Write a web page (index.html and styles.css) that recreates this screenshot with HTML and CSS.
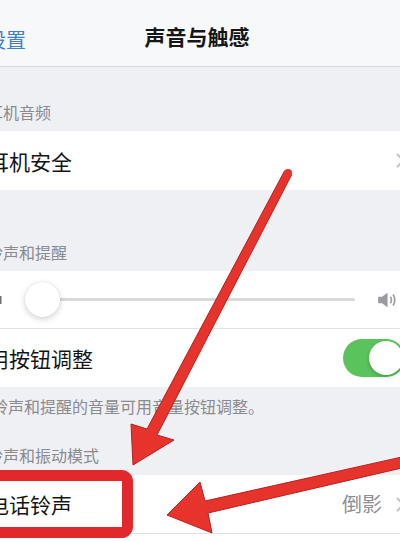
FILE: index.html
```html
<!DOCTYPE html>
<html lang="zh">
<head>
<meta charset="utf-8">
<title>声音与触感</title>
<link rel="stylesheet" href="styles.css">
</head>
<body>
<div class="screen">
  <header class="nav">
    <span class="back">设置</span>
    <h1 class="title">声音与触感</h1>
  </header>

  <div class="sec-h sec-1">耳机音频</div>
  <div class="group">
    <div class="cell cell-59">
      <span class="label">耳机安全</span>
      <svg class="chev" viewBox="0 0 9 15"><path d="M1.5 1.5 L7.5 7.5 L1.5 13.5" fill="none" stroke="#c4c4c7" stroke-width="2" stroke-linecap="round" stroke-linejoin="round"/></svg>
    </div>
  </div>

  <div class="sec-h sec-2">铃声和提醒</div>
  <div class="group">
    <div class="cell slider-cell">
      <svg class="spk-low" viewBox="0 0 16 16"><path d="M1 5.5 H4.5 L9 2 V14 L4.5 10.5 H1 Z" fill="#707074"/><rect x="11" y="4" width="3.5" height="8" fill="#707074"/></svg>
      <div class="track">
        <div class="track-line"></div>
        <div class="thumb"></div>
      </div>
      <svg class="spk-high" viewBox="0 0 18 16"><path d="M1 5 H4.5 L9.5 1.5 V14.5 L4.5 11 H1 Z" fill="#9b9b9f"/><path d="M12 5 Q14 8 12 11" fill="none" stroke="#9b9b9f" stroke-width="1.5"/><path d="M14.5 3 Q17.5 8 14.5 13" fill="none" stroke="#9b9b9f" stroke-width="1.5"/></svg>
    </div>
    <div class="sep"></div>
    <div class="cell cell-58">
      <span class="label">用按钮调整</span>
      <span class="toggle"><span class="knob"></span></span>
    </div>
  </div>

  <div class="sec-f">铃声和提醒的音量可用音量按钮调整。</div>
  <div class="sec-h sec-3">铃声和振动模式</div>
  <div class="group">
    <div class="cell cell-58">
      <span class="label">电话铃声</span>
      <span class="detail">倒影</span>
      <svg class="chev chev-gap" viewBox="0 0 9 15"><path d="M1.5 1.5 L7.5 7.5 L1.5 13.5" fill="none" stroke="#c4c4c7" stroke-width="2" stroke-linecap="round" stroke-linejoin="round"/></svg>
    </div>
    <div class="sep"></div>
    <div class="cell cell-58"></div>
  </div>

  <svg class="marks" viewBox="0 0 400 541" width="400" height="541">
    <rect x="-20" y="475.5" width="147.5" height="57" rx="6" ry="6" fill="none" stroke="#e1282b" stroke-width="11"/>
    <g fill="#e6332c" stroke="#b9201f" stroke-width="1" stroke-linejoin="round">
      <polygon points="284.5,171 291.5,175 157,435 174,440 133,465 131,424 147,429"/>
      <polygon points="404,456.5 404,467.5 208,513 212,533 167,515 200,482 205,501"/>
    </g>
    <circle cx="288" cy="173" r="4" fill="#e6332c"/>
  </svg>
</div>
</body>
</html>
```

FILE: styles.css
```css
html, body {
  margin: 0;
  padding: 0;
  background: #eff0f4;
}

.screen {
  position: relative;
  width: 400px;
  height: 541px;
  overflow: hidden;
  background: #eff0f4;
  font-family: "Noto Sans CJK SC", "Noto Sans", sans-serif;
}

.nav {
  height: 66px;
  background: #f7f8fa;
  border-bottom: 1px solid #d8d9dc;
  display: flex;
  align-items: center;
  justify-content: center;
  position: relative;
}

.back {
  position: absolute;
  left: -14px;
  top: 27px;
  font-size: 20px;
  line-height: 26px;
  color: #4080c8;
}

.title {
  margin: 6px 0 0 -6px;
  font-size: 21px;
  line-height: 28px;
  font-weight: 600;
  color: #161616;
}

.sec-h {
  display: flex;
  align-items: flex-end;
  box-sizing: border-box;
  font-size: 16px;
  line-height: 22px;
  color: #8a8a8f;
  text-indent: -13px;
  padding-bottom: 8px;
}

.sec-1 { height: 64px; }
.sec-2 { height: 81px; }
.sec-3 { height: 39px; padding-bottom: 9px; }

.sec-f {
  box-sizing: border-box;
  height: 49px;
  padding-top: 8px;
  font-size: 16px;
  line-height: 22px;
  color: #8a8a8f;
  text-indent: -8px;
}

.group {
  background: #ffffff;
}

.cell {
  display: flex;
  align-items: center;
  background: #ffffff;
}

.cell-59 { height: 59px; }
.cell-58 { height: 58px; }

.label {
  margin-left: -12px;
  font-size: 21px;
  line-height: 28px;
  color: #141414;
  flex: 1;
}

.detail {
  font-size: 20px;
  line-height: 28px;
  color: #8e8e93;
}

.chev {
  width: 9px;
  height: 15px;
  margin-right: -5px;
  flex: none;
}

.chev-gap {
  margin-left: 14px;
}

.sep {
  height: 1px;
  background: #e1e2e5;
}

.slider-cell {
  height: 57px;
}

.spk-low {
  width: 16px;
  height: 16px;
  margin-left: -13px;
  flex: none;
}

.track {
  flex: 1;
  margin: 0 22px;
  height: 36px;
  position: relative;
  display: flex;
  align-items: center;
}

.track-line {
  flex: 1;
  height: 3px;
  border-radius: 2px;
  background: #d9d9dc;
}

.thumb {
  position: absolute;
  left: 0;
  top: 0;
  width: 35px;
  height: 35px;
  border-radius: 50%;
  background: #ffffff;
  box-shadow: 0 2px 6px rgba(0, 0, 0, 0.18), 0 0 1px rgba(0, 0, 0, 0.15);
}

.spk-high {
  width: 20px;
  height: 18px;
  margin-right: 3px;
  flex: none;
}

.toggle {
  width: 62px;
  height: 38px;
  margin-right: -5px;
  border-radius: 19px;
  background: #5ac35c;
  display: flex;
  align-items: center;
  justify-content: flex-end;
  padding: 0 2px;
  box-sizing: border-box;
  flex: none;
}

.knob {
  width: 34px;
  height: 34px;
  border-radius: 50%;
  background: #ffffff;
  box-shadow: 0 2px 4px rgba(0, 0, 0, 0.2);
}

.marks {
  position: absolute;
  left: 0;
  top: 0;
  pointer-events: none;
}
```
